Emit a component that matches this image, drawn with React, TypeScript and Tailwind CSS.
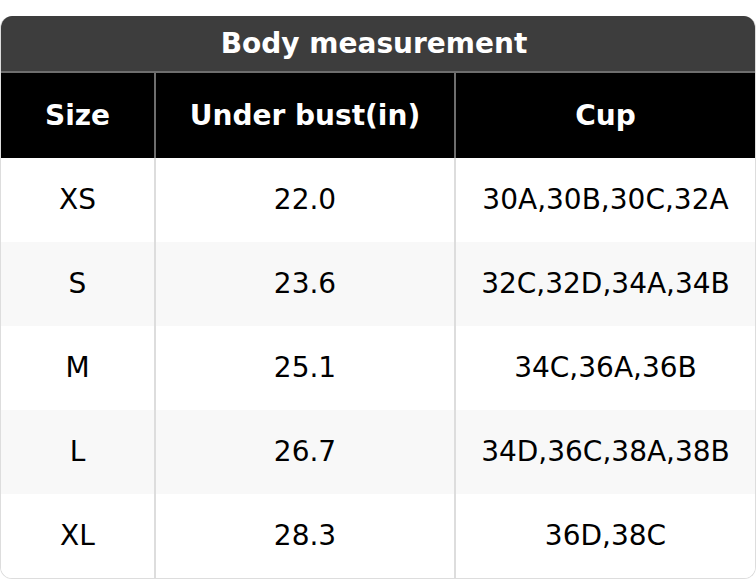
const rows = [
  { size: "XS", bust: "22.0", cup: "30A,30B,30C,32A" },
  { size: "S", bust: "23.6", cup: "32C,32D,34A,34B" },
  { size: "M", bust: "25.1", cup: "34C,36A,36B" },
  { size: "L", bust: "26.7", cup: "34D,36C,38A,38B" },
  { size: "XL", bust: "28.3", cup: "36D,38C" },
];

export default function App() {
  return (
    <div className="bg-white pt-4 font-['DejaVu_Sans',sans-serif]">
      <div className="overflow-hidden rounded-xl border border-[#dddddd] border-t-0">
        <div className="flex h-[57px] items-center justify-center border-b-2 border-[#6e6e6e] bg-[#3d3d3d] pt-px pr-2 text-[28px] font-bold text-white">
          Body measurement
        </div>
        <div className="grid h-[85px] grid-cols-[153px_300px_1fr] bg-black text-[28px] font-bold text-white">
          <div className="flex items-center justify-center">Size</div>
          <div className="flex items-center justify-center border-l-2 border-[#6e6e6e]">Under bust(in)</div>
          <div className="flex items-center justify-center border-l-2 border-[#6e6e6e]">Cup</div>
        </div>
        {rows.map((r, i) => (
          <div
            key={r.size}
            className={`grid h-[84px] grid-cols-[153px_300px_1fr] text-[28px] text-black ${i % 2 === 1 ? "bg-[#f8f8f8]" : "bg-white"}`}
          >
            <div className="flex items-center justify-center">{r.size}</div>
            <div className="flex items-center justify-center border-l-2 border-[#dddddd]">{r.bust}</div>
            <div className="flex items-center justify-center border-l-2 border-[#dddddd]">{r.cup}</div>
          </div>
        ))}
      </div>
    </div>
  );
}
